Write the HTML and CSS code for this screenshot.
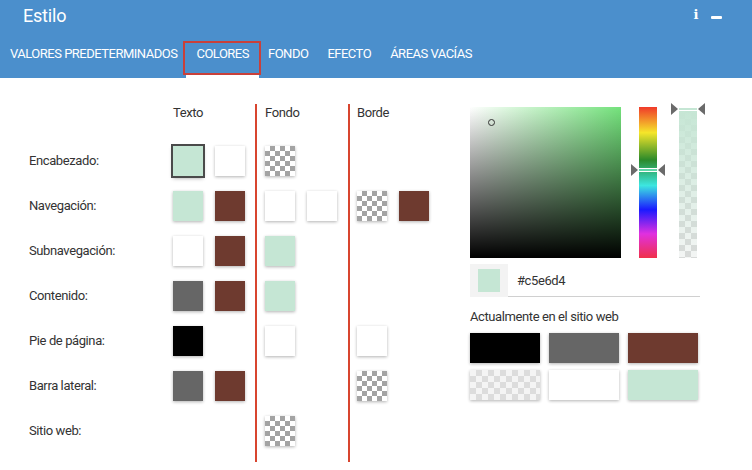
FILE: index.html
```html
<!DOCTYPE html>
<html lang="es">
<head>
    <meta charset="UTF-8">
    <meta name="viewport" content="width=device-width, initial-scale=1.0">
    <title>Estilo</title>
    <link rel="stylesheet" href="styles.css">
</head>
<body>
    <header class="topbar">
        <div class="title-row">
            <h1>Estilo</h1>
            <div class="win-icons">
                <span class="info">i</span>
                <span class="minimize"></span>
            </div>
        </div>
        <nav class="tabs">
            <a href="#">Valores predeterminados</a>
            <a href="#" class="active">Colores</a>
            <a href="#">Fondo</a>
            <a href="#">Efecto</a>
            <a href="#">Áreas vacías</a>
        </nav>
    </header>

    <main class="colors-page">
        <div class="labels">
            <div class="label">Encabezado:</div>
            <div class="label">Navegación:</div>
            <div class="label">Subnavegación:</div>
            <div class="label">Contenido:</div>
            <div class="label">Pie de página:</div>
            <div class="label">Barra lateral:</div>
            <div class="label">Sitio web:</div>
        </div>

        <div class="col-group">
            <div class="col-title">Texto</div>
            <div class="sw-row"><span class="sw mint selected"></span><span class="sw white"></span></div>
            <div class="sw-row"><span class="sw mint"></span><span class="sw brown"></span></div>
            <div class="sw-row"><span class="sw white"></span><span class="sw brown"></span></div>
            <div class="sw-row"><span class="sw gray"></span><span class="sw brown"></span></div>
            <div class="sw-row"><span class="sw black"></span></div>
            <div class="sw-row"><span class="sw gray"></span><span class="sw brown"></span></div>
            <div class="sw-row"></div>
        </div>

        <div class="col-group split first-split">
            <div class="col-title">Fondo</div>
            <div class="sw-row"><span class="sw checker"></span></div>
            <div class="sw-row"><span class="sw white"></span><span class="sw white"></span></div>
            <div class="sw-row"><span class="sw mint"></span></div>
            <div class="sw-row"><span class="sw mint"></span></div>
            <div class="sw-row"><span class="sw white"></span></div>
            <div class="sw-row"></div>
            <div class="sw-row"><span class="sw checker"></span></div>
        </div>

        <div class="col-group split">
            <div class="col-title">Borde</div>
            <div class="sw-row"></div>
            <div class="sw-row"><span class="sw checker"></span><span class="sw brown"></span></div>
            <div class="sw-row"></div>
            <div class="sw-row"></div>
            <div class="sw-row"><span class="sw white"></span></div>
            <div class="sw-row"><span class="sw checker"></span></div>
            <div class="sw-row"></div>
        </div>

        <div class="picker-panel">
            <div class="picker-row">
                <div class="sv-box">
                    <span class="sv-dot"></span>
                </div>
                <div class="hue-bar">
                    <span class="bar-marker hue-marker"></span>
                </div>
                <div class="alpha-bar">
                    <span class="bar-marker alpha-marker"></span>
                </div>
            </div>
            <div class="hex-row">
                <div class="hex-preview"><span></span></div>
                <div class="hex-value">#c5e6d4</div>
            </div>
            <div class="current-title">Actualmente en el sitio web</div>
            <div class="current-grid">
                <span class="cur black"></span>
                <span class="cur gray"></span>
                <span class="cur brown"></span>
                <span class="cur light-checker"></span>
                <span class="cur white"></span>
                <span class="cur mint"></span>
            </div>
        </div>
    </main>
</body>
</html>
```

FILE: styles.css
```css
body {
    margin: 0;
    font-family: Roboto, "Liberation Sans", Arial, sans-serif;
    letter-spacing: -0.4px;
    background-color: white;
    color: #333;
}

/* Header */
.topbar {
    background-color: #4b8fcc;
    color: white;
    height: 78px;
}
.title-row {
    display: flex;
    align-items: center;
    height: 30px;
    padding-left: 23px;
    padding-right: 30px;
}
.title-row h1 {
    margin: 0;
    font-size: 18px;
    font-weight: 400;
    letter-spacing: -0.2px;
}
.win-icons {
    margin-left: auto;
    display: flex;
    align-items: center;
    gap: 13px;
}
.info {
    font-family: "DejaVu Serif", serif;
    font-weight: bold;
    font-size: 13px;
    line-height: 14px;
}
.minimize {
    width: 11px;
    height: 3px;
    margin-top: 5px;
    background-color: white;
    border-radius: 1px;
}

/* Tabs */
.tabs {
    display: flex;
    height: 48px;
}
.tabs a {
    position: relative;
    box-sizing: border-box;
    height: 48px;
    padding: 3px 10px 0;
    margin-right: -1px;
    line-height: 42px;
    border-bottom: 3px solid transparent;
    color: white;
    text-decoration: none;
    text-transform: uppercase;
    font-size: 13px;
    letter-spacing: -0.5px;
}
.tabs a.active {
    border-bottom-color: white;
}
.tabs a.active::before {
    content: "";
    position: absolute;
    top: 11px;
    bottom: 0;
    left: -3px;
    right: -2px;
    border: 2px solid #c9403a;
}

/* Colour table */
.colors-page {
    display: flex;
    padding: 26px 0 0 29px;
}
.labels {
    width: 144px;
    padding-top: 42px;
}
.label {
    height: 30px;
    line-height: 30px;
    margin-bottom: 15px;
    font-size: 13px;
}
.col-group {
    width: 72px;
    padding-bottom: 1px;
}
.col-group.split {
    margin-left: 11px;
    padding-left: 7px;
    border-left: 2px solid #d8452f;
}
.col-group.first-split {
    margin-left: 10px;
    padding-left: 8px;
}
.col-title {
    height: 42px;
    line-height: 18px;
    font-size: 13px;
}
.sw-row {
    display: flex;
    gap: 12px;
    height: 30px;
    margin-bottom: 15px;
}
.sw {
    width: 30px;
    height: 30px;
    box-shadow: 0 1px 3px rgba(0, 0, 0, 0.3);
}
.sw.selected {
    box-shadow: 0 0 0 2px #4a4a4a, 0 2px 4px rgba(0, 0, 0, 0.4);
}
.mint { background-color: #c5e6d4; }
.white { background-color: white; }
.brown { background-color: #6e3a2f; }
.gray { background-color: #666; }
.black { background-color: black; }
.checker {
    background: conic-gradient(#a3a3a3 25%, white 0 50%, #a3a3a3 0 75%, white 0) 0 0 / 10px 10px;
}
.light-checker {
    background: conic-gradient(#dcdcdc 25%, #f4f4f4 0 50%, #dcdcdc 0 75%, #f4f4f4 0) 0 0 / 12px 12px;
}

/* Picker */
.picker-panel {
    margin-left: 41px;
    margin-top: 3px;
    width: 233px;
}
.picker-row {
    display: flex;
    height: 151px;
}
.sv-box {
    position: relative;
    width: 151px;
    height: 151px;
    background:
        linear-gradient(to top, black, rgba(0, 0, 0, 0)),
        linear-gradient(to right, white, #74e27c);
}
.sv-dot {
    position: absolute;
    left: 18px;
    top: 12px;
    width: 5px;
    height: 5px;
    border: 1px solid #333;
    border-radius: 50%;
}
.hue-bar {
    position: relative;
    width: 18px;
    margin-left: 18px;
    background: linear-gradient(to bottom, #f03a2a, #f5e62a 17%, #2c8a2a 35%, #3de6e0 52%, #1a1aff 68%, #e030e0 84%, #f0304a);
}
.alpha-bar {
    position: relative;
    width: 18px;
    margin-left: 22px;
    background:
        linear-gradient(to bottom, #c5e6d4, rgba(197, 230, 212, 0.05)),
        conic-gradient(#d9d9d9 25%, #f6f6f6 0 50%, #d9d9d9 0 75%, #f6f6f6 0) 0 0 / 12px 12px;
}
.bar-marker {
    position: absolute;
    left: 0;
    right: 0;
    height: 2px;
    border-top: 1px solid white;
    border-bottom: 1px solid white;
}
.hue-marker {
    top: 61px;
    background-color: #5fd6a8;
}
.alpha-marker {
    top: 0;
    background-color: #c5e6d4;
}
.bar-marker::before,
.bar-marker::after {
    content: "";
    position: absolute;
    top: -5px;
    border-top: 6px solid transparent;
    border-bottom: 6px solid transparent;
}
.bar-marker::before {
    left: -8px;
    border-left: 7px solid #6a6a6a;
}
.bar-marker::after {
    right: -8px;
    border-right: 7px solid #6a6a6a;
}

.hex-row {
    display: flex;
    margin-top: 6px;
    height: 33px;
}
.hex-preview {
    display: flex;
    align-items: center;
    justify-content: center;
    width: 38px;
    background-color: #f3f3f3;
}
.hex-preview span {
    width: 22px;
    height: 23px;
    background-color: #c5e6d4;
}
.hex-value {
    width: 183px;
    padding-left: 9px;
    line-height: 33px;
    font-size: 13px;
    border-bottom: 1px solid #d0d0d0;
}
.current-title {
    margin-top: 12px;
    font-size: 13px;
    line-height: 16px;
}
.current-grid {
    display: grid;
    grid-template-columns: repeat(3, 70px);
    grid-auto-rows: 30px;
    column-gap: 9px;
    row-gap: 7px;
    margin-top: 8px;
}
.cur {
    box-shadow: 0 1px 3px rgba(0, 0, 0, 0.3);
}
```
